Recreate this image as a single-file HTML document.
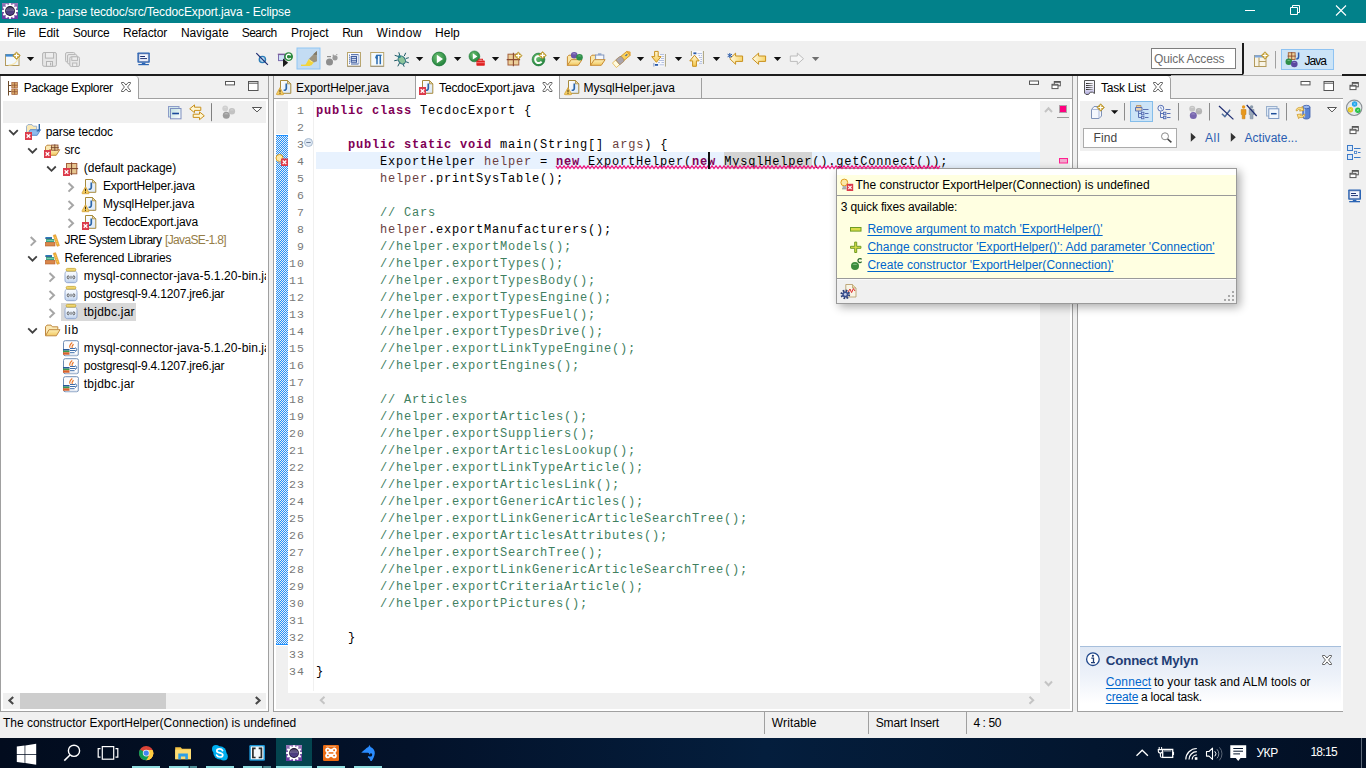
<!DOCTYPE html>
<html>
<head>
<meta charset="utf-8">
<title>Java - parse tecdoc/src/TecdocExport.java - Eclipse</title>
<style>
*{box-sizing:border-box;margin:0;padding:0}
html,body{width:1366px;height:768px;overflow:hidden;background:#f0f0f0}
body{font-family:"Liberation Sans",sans-serif;font-size:12px;color:#000;position:relative}
.a{position:absolute}
.t{position:absolute;white-space:pre;line-height:16px;height:16px;font-size:12px}
.m{position:absolute;white-space:pre;line-height:17px;height:17px;font-family:"Liberation Mono",monospace;font-size:12px;letter-spacing:.8px}
.kw{color:#7f0055;font-weight:bold}
.cm{color:#3f7f5f}
.lv{color:#6a3e3e}
.u{text-decoration:underline;text-underline-offset:1.5px;text-decoration-thickness:1px}
svg{position:absolute;overflow:visible}
</style>
</head>
<body>
<!-- title bar -->
<div class="a" style="left:0;top:0;width:1366px;height:23px;background:#02818a"></div>
<!-- menu bar -->
<div class="a" style="left:0;top:23px;width:1366px;height:18px;background:#fff"></div>
<!-- toolbar bottom dark line -->
<div class="a" style="left:0;top:74px;width:1243px;height:2px;background:#1c1c1c"></div>
<div class="a" style="left:1242px;top:43px;width:2px;height:32px;background:#1c1c1c;border-radius:0 0 2px 0"></div>
<div class="a" style="left:1342px;top:74px;width:24px;height:2px;background:#1c1c1c"></div>

<!-- quick access + java button -->
<div class="a" style="left:1151px;top:48px;width:85px;height:21px;background:#fff;border:1px solid #7e7e7e"></div>
<div class="a" style="left:1281px;top:49px;width:53px;height:21px;background:#cce4f7;border:1px solid #8fc3f2"></div>
<!-- LEFT PANEL -->
<div class="a" style="left:0;top:76px;width:269px;height:636px;background:#fff;border:1px solid #a0a0a0;border-top:none"></div>
<div class="a" style="left:1px;top:76px;width:267px;height:22px;background:#f0f0f0"></div>
<div class="a" style="left:1px;top:98px;width:267px;height:1px;background:#a0a0a0"></div>
<div class="a" style="left:1px;top:76px;width:138px;height:23px;background:#fff;border-right:1px solid #a0a0a0;border-radius:0 4px 0 0"></div>
<div class="a" style="left:3px;top:101px;width:263px;height:22px;background:#f0f0f0"></div>
<!-- tree selection -->
<div class="a" style="left:61px;top:303px;width:75px;height:18px;background:#d9d9d9"></div>
<!-- left hscroll -->
<div class="a" style="left:3px;top:693px;width:263px;height:16px;background:#f0f0f0"></div>
<div class="a" style="left:20px;top:693px;width:146px;height:16px;background:#cdcdcd"></div>

<!-- EDITOR PANEL -->
<div class="a" style="left:273px;top:76px;width:800px;height:636px;background:#fff;border:1px solid #a0a0a0;border-top:none"></div>
<div class="a" style="left:274px;top:76px;width:798px;height:22px;background:#f0f0f0"></div>
<div class="a" style="left:274px;top:98px;width:798px;height:1px;background:#a0a0a0"></div>
<div class="a" style="left:415px;top:76px;width:145px;height:23px;background:#fff;border-left:1px solid #a0a0a0;border-right:1px solid #a0a0a0"></div>
<div class="a" style="left:701px;top:78px;width:1px;height:20px;background:#a0a0a0"></div>
<!-- gutter -->
<div class="a" style="left:276px;top:101px;width:12px;height:608px;background:#f0f0f0"></div>
<div class="a" style="left:276px;top:134px;width:12px;height:512px;background:#fff"></div>
<div class="a" style="left:276px;top:135px;width:12px;height:510px;background:#1e90ff"></div>
<div class="a" style="left:276px;top:136px;width:12px;height:508px;background-image:conic-gradient(#1e90ff 0 25%,#f0f0f0 0 50%,#1e90ff 0 75%,#f0f0f0 0);background-size:2px 2px"></div>
<!-- current line -->
<div class="a" style="left:316px;top:152px;width:724px;height:17px;background:#e8f2fe"></div>
<!-- selected word occurrences -->
<div class="a" style="left:724px;top:152px;width:88px;height:17px;background:#d4d4d4"></div>
<!-- editor scrollbars -->
<div class="a" style="left:1040px;top:101px;width:30px;height:592px;background:#f0f0f0"></div>
<div class="a" style="left:276px;top:693px;width:794px;height:16px;background:#f0f0f0"></div>
<div class="a" style="left:288px;top:101px;width:28px;height:592px;background:#fff"></div>

<!-- RIGHT PANEL -->
<div class="a" style="left:1077px;top:76px;width:266px;height:636px;background:#fff;border:1px solid #a0a0a0;border-top:none;border-right:none"></div>
<div class="a" style="left:1078px;top:76px;width:265px;height:22px;background:#f0f0f0"></div>
<div class="a" style="left:1171px;top:75px;width:171px;height:1px;background:#b4b4b4"></div>
<div class="a" style="left:1078px;top:98px;width:265px;height:1px;background:#a0a0a0"></div>
<div class="a" style="left:1078px;top:76px;width:93px;height:23px;background:#fff;border-right:1px solid #a0a0a0;border-radius:0 4px 0 0"></div>
<div class="a" style="left:1080px;top:101px;width:261px;height:50px;background:#f0f0f0"></div>
<div class="a" style="left:1130px;top:101px;width:23px;height:21px;background:#cce4f7;border:1px solid #84bdea"></div>
<div class="a" style="left:1083px;top:128px;width:94px;height:20px;background:#fff;border:1px solid #ababab"></div>
<!-- mylyn -->
<div class="a" style="left:1080px;top:646px;width:261px;height:62px;background:linear-gradient(#e0e8f4,#ecf1f9 45%,#fff 92%);border-top:1px solid #a7bfdc"></div>

<!-- STATUS BAR -->
<div class="a" style="left:764px;top:712px;width:1px;height:22px;background:#a0a0a0"></div>
<div class="a" style="left:868px;top:712px;width:1px;height:22px;background:#a0a0a0"></div>
<div class="a" style="left:966px;top:712px;width:1px;height:22px;background:#a0a0a0"></div>

<!-- TASKBAR -->
<div class="a" style="left:0;top:738px;width:1366px;height:30px;background:linear-gradient(90deg,#020c1e,#03122a 30%,#041e3d 56%,#03162f 80%,#020f24)"></div>
<div class="a" style="left:276px;top:738px;width:36px;height:30px;background:#04444f"></div>

<!-- POPUP -->
<div class="a" style="left:836px;top:168px;width:401px;height:136px;background:#ffffe1;border:1px solid #9a9a9a;box-shadow:3px 3px 9px rgba(0,0,0,.33)"></div>
<div class="a" style="left:837px;top:169px;width:399px;height:6px;background:#fff"></div>
<div class="a" style="left:837px;top:195px;width:399px;height:1px;background:#9a9a9a"></div>
<div class="a" style="left:837px;top:278px;width:399px;height:25px;background:#f0f0f0;border-top:1px solid #9a9a9a"></div>
<div class="a" style="left:837px;top:279px;width:399px;height:1px;background:#fbfbfb"></div>

<!-- code -->
<div class="m" style="left:280.900px;top:102px;width:24px;text-align:right;color:#787878;font-size:11.5px;letter-spacing:1.1px">1</div>
<div class="m" style="left:316px;top:103px"><span class="kw">public</span> <span class="kw">class</span> TecdocExport {</div>
<div class="m" style="left:280.900px;top:119px;width:24px;text-align:right;color:#787878;font-size:11.5px;letter-spacing:1.1px">2</div>
<div class="m" style="left:280.900px;top:136px;width:24px;text-align:right;color:#787878;font-size:11.5px;letter-spacing:1.1px">3</div>
<div class="m" style="left:316px;top:137px">    <span class="kw">public</span> <span class="kw">static</span> <span class="kw">void</span> main(String[] <span class="lv">args</span>) {</div>
<div class="m" style="left:280.900px;top:153px;width:24px;text-align:right;color:#787878;font-size:11.5px;letter-spacing:1.1px">4</div>
<div class="m" style="left:316px;top:154px">        ExportHelper <span class="lv">helper</span> = <span class="kw">new</span> ExportHelper(<span class="kw">new</span> MysqlHelper().getConnect());</div>
<div class="m" style="left:280.900px;top:170px;width:24px;text-align:right;color:#787878;font-size:11.5px;letter-spacing:1.1px">5</div>
<div class="m" style="left:316px;top:171px">        <span class="lv">helper</span>.printSysTable();</div>
<div class="m" style="left:280.900px;top:187px;width:24px;text-align:right;color:#787878;font-size:11.5px;letter-spacing:1.1px">6</div>
<div class="m" style="left:280.900px;top:204px;width:24px;text-align:right;color:#787878;font-size:11.5px;letter-spacing:1.1px">7</div>
<div class="m" style="left:316px;top:205px">        <span class="cm">// Cars</span></div>
<div class="m" style="left:280.900px;top:221px;width:24px;text-align:right;color:#787878;font-size:11.5px;letter-spacing:1.1px">8</div>
<div class="m" style="left:316px;top:222px">        <span class="lv">helper</span>.exportManufacturers();</div>
<div class="m" style="left:280.900px;top:238px;width:24px;text-align:right;color:#787878;font-size:11.5px;letter-spacing:1.1px">9</div>
<div class="m" style="left:316px;top:239px">        <span class="cm">//helper.exportModels();</span></div>
<div class="m" style="left:280.900px;top:255px;width:24px;text-align:right;color:#787878;font-size:11.5px;letter-spacing:1.1px">10</div>
<div class="m" style="left:316px;top:256px">        <span class="cm">//helper.exportTypes();</span></div>
<div class="m" style="left:280.900px;top:272px;width:24px;text-align:right;color:#787878;font-size:11.5px;letter-spacing:1.1px">11</div>
<div class="m" style="left:316px;top:273px">        <span class="cm">//helper.exportTypesBody();</span></div>
<div class="m" style="left:280.900px;top:289px;width:24px;text-align:right;color:#787878;font-size:11.5px;letter-spacing:1.1px">12</div>
<div class="m" style="left:316px;top:290px">        <span class="cm">//helper.exportTypesEngine();</span></div>
<div class="m" style="left:280.900px;top:306px;width:24px;text-align:right;color:#787878;font-size:11.5px;letter-spacing:1.1px">13</div>
<div class="m" style="left:316px;top:307px">        <span class="cm">//helper.exportTypesFuel();</span></div>
<div class="m" style="left:280.900px;top:323px;width:24px;text-align:right;color:#787878;font-size:11.5px;letter-spacing:1.1px">14</div>
<div class="m" style="left:316px;top:324px">        <span class="cm">//helper.exportTypesDrive();</span></div>
<div class="m" style="left:280.900px;top:340px;width:24px;text-align:right;color:#787878;font-size:11.5px;letter-spacing:1.1px">15</div>
<div class="m" style="left:316px;top:341px">        <span class="cm">//helper.exportLinkTypeEngine();</span></div>
<div class="m" style="left:280.900px;top:357px;width:24px;text-align:right;color:#787878;font-size:11.5px;letter-spacing:1.1px">16</div>
<div class="m" style="left:316px;top:358px">        <span class="cm">//helper.exportEngines();</span></div>
<div class="m" style="left:280.900px;top:374px;width:24px;text-align:right;color:#787878;font-size:11.5px;letter-spacing:1.1px">17</div>
<div class="m" style="left:280.900px;top:391px;width:24px;text-align:right;color:#787878;font-size:11.5px;letter-spacing:1.1px">18</div>
<div class="m" style="left:316px;top:392px">        <span class="cm">// Articles</span></div>
<div class="m" style="left:280.900px;top:408px;width:24px;text-align:right;color:#787878;font-size:11.5px;letter-spacing:1.1px">19</div>
<div class="m" style="left:316px;top:409px">        <span class="cm">//helper.exportArticles();</span></div>
<div class="m" style="left:280.900px;top:425px;width:24px;text-align:right;color:#787878;font-size:11.5px;letter-spacing:1.1px">20</div>
<div class="m" style="left:316px;top:426px">        <span class="cm">//helper.exportSuppliers();</span></div>
<div class="m" style="left:280.900px;top:442px;width:24px;text-align:right;color:#787878;font-size:11.5px;letter-spacing:1.1px">21</div>
<div class="m" style="left:316px;top:443px">        <span class="cm">//helper.exportArticlesLookup();</span></div>
<div class="m" style="left:280.900px;top:459px;width:24px;text-align:right;color:#787878;font-size:11.5px;letter-spacing:1.1px">22</div>
<div class="m" style="left:316px;top:460px">        <span class="cm">//helper.exportLinkTypeArticle();</span></div>
<div class="m" style="left:280.900px;top:476px;width:24px;text-align:right;color:#787878;font-size:11.5px;letter-spacing:1.1px">23</div>
<div class="m" style="left:316px;top:477px">        <span class="cm">//helper.exportArticlesLink();</span></div>
<div class="m" style="left:280.900px;top:493px;width:24px;text-align:right;color:#787878;font-size:11.5px;letter-spacing:1.1px">24</div>
<div class="m" style="left:316px;top:494px">        <span class="cm">//helper.exportGenericArticles();</span></div>
<div class="m" style="left:280.900px;top:510px;width:24px;text-align:right;color:#787878;font-size:11.5px;letter-spacing:1.1px">25</div>
<div class="m" style="left:316px;top:511px">        <span class="cm">//helper.exportLinkGenericArticleSearchTree();</span></div>
<div class="m" style="left:280.900px;top:527px;width:24px;text-align:right;color:#787878;font-size:11.5px;letter-spacing:1.1px">26</div>
<div class="m" style="left:316px;top:528px">        <span class="cm">//helper.exportArticlesAttributes();</span></div>
<div class="m" style="left:280.900px;top:544px;width:24px;text-align:right;color:#787878;font-size:11.5px;letter-spacing:1.1px">27</div>
<div class="m" style="left:316px;top:545px">        <span class="cm">//helper.exportSearchTree();</span></div>
<div class="m" style="left:280.900px;top:561px;width:24px;text-align:right;color:#787878;font-size:11.5px;letter-spacing:1.1px">28</div>
<div class="m" style="left:316px;top:562px">        <span class="cm">//helper.exportLinkGenericArticleSearchTree();</span></div>
<div class="m" style="left:280.900px;top:578px;width:24px;text-align:right;color:#787878;font-size:11.5px;letter-spacing:1.1px">29</div>
<div class="m" style="left:316px;top:579px">        <span class="cm">//helper.exportCriteriaArticle();</span></div>
<div class="m" style="left:280.900px;top:595px;width:24px;text-align:right;color:#787878;font-size:11.5px;letter-spacing:1.1px">30</div>
<div class="m" style="left:316px;top:596px">        <span class="cm">//helper.exportPictures();</span></div>
<div class="m" style="left:280.900px;top:612px;width:24px;text-align:right;color:#787878;font-size:11.5px;letter-spacing:1.1px">31</div>
<div class="m" style="left:280.900px;top:629px;width:24px;text-align:right;color:#787878;font-size:11.5px;letter-spacing:1.1px">32</div>
<div class="m" style="left:316px;top:630px">    }</div>
<div class="m" style="left:280.900px;top:646px;width:24px;text-align:right;color:#787878;font-size:11.5px;letter-spacing:1.1px">33</div>
<div class="m" style="left:280.900px;top:663px;width:24px;text-align:right;color:#787878;font-size:11.5px;letter-spacing:1.1px">34</div>
<div class="m" style="left:316px;top:664px">}</div>
<!-- editor overlay -->
<svg style="left:270px;top:98px" width="810" height="614" viewBox="270 98 810 614">
 <polyline points="556,165.800 558,168.600 560,165.800 562,168.600 564,165.800 566,168.600 568,165.800 570,168.600 572,165.800 574,168.600 576,165.800 578,168.600 580,165.800 582,168.600 584,165.800 586,168.600 588,165.800 590,168.600 592,165.800 594,168.600 596,165.800 598,168.600 600,165.800 602,168.600 604,165.800 606,168.600 608,165.800 610,168.600 612,165.800 614,168.600 616,165.800 618,168.600 620,165.800 622,168.600 624,165.800 626,168.600 628,165.800 630,168.600 632,165.800 634,168.600 636,165.800 638,168.600 640,165.800 642,168.600 644,165.800 646,168.600 648,165.800 650,168.600 652,165.800 654,168.600 656,165.800 658,168.600 660,165.800 662,168.600 664,165.800 666,168.600 668,165.800 670,168.600 672,165.800 674,168.600 676,165.800 678,168.600 680,165.800 682,168.600 684,165.800 686,168.600 688,165.800 690,168.600 692,165.800 694,168.600 696,165.800 698,168.600 700,165.800 702,168.600 704,165.800 706,168.600 708,165.800 710,168.600 712,165.800 714,168.600 716,165.800 718,168.600 720,165.800 722,168.600 724,165.800 726,168.600 728,165.800 730,168.600 732,165.800 734,168.600 736,165.800 738,168.600 740,165.800 742,168.600 744,165.800 746,168.600 748,165.800 750,168.600 752,165.800 754,168.600 756,165.800 758,168.600 760,165.800 762,168.600 764,165.800 766,168.600 768,165.800 770,168.600 772,165.800 774,168.600 776,165.800 778,168.600 780,165.800 782,168.600 784,165.800 786,168.600 788,165.800 790,168.600 792,165.800 794,168.600 796,165.800 798,168.600 800,165.800 802,168.600 804,165.800 806,168.600 808,165.800 810,168.600 812,165.800 814,168.600 816,165.800 818,168.600 820,165.800 822,168.600 824,165.800 826,168.600 828,165.800 830,168.600 832,165.800 834,168.600 836,165.800 838,168.600 840,165.800 842,168.600 844,165.800 846,168.600 848,165.800 850,168.600 852,165.800 854,168.600 856,165.800 858,168.600 860,165.800 862,168.600 864,165.800 866,168.600 868,165.800 870,168.600 872,165.800 874,168.600 876,165.800 878,168.600 880,165.800 882,168.600 884,165.800 886,168.600 888,165.800 890,168.600 892,165.800 894,168.600 896,165.800 898,168.600 900,165.800 902,168.600 904,165.800 906,168.600 908,165.800 910,168.600 912,165.800 914,168.600 916,165.800 918,168.600 920,165.800 922,168.600 924,165.800 926,168.600 928,165.800 930,168.600 932,165.800 934,168.600 936,165.800 938,168.600 940,165.800" fill="none" stroke="#f0107a" stroke-width="1.150"/>
 <rect x="708" y="152" width="2" height="17" fill="#111"/>
 <path d="M313.500 101v590" stroke="#f0f0f0" stroke-width="1"/>
 <!-- fold marker -->
 <circle cx="308.500" cy="142.500" r="4" fill="#dfe9f4" stroke="#a9bbd0" stroke-width="1"/>
 <path d="M306.300 142.500h4.400" stroke="#6f7f98" stroke-width="1"/>
 <!-- quick fix marker -->
 <circle cx="279.500" cy="158" r="3.500" fill="#fbe9a8" stroke="#e0a020" stroke-width="1"/>
 <rect x="278" y="161.500" width="3.500" height="2.300" fill="#a8b0b8"/>
 <rect x="281" y="158.500" width="7" height="7.500" fill="#dc3b4b"/>
 <path d="M282.700 160.500l3.600 3.600M286.300 160.500l-3.600 3.600" stroke="#fff" stroke-width="1.300"/>
 <!-- overview ruler -->
 <rect x="1059.500" y="105.500" width="7" height="7" fill="#ff0080" stroke="#b0a0a8" stroke-width="1"/>
 <path d="M1057 117.500h12" stroke="#9a9a9a" stroke-width="1"/>
 <rect x="1059.500" y="158.500" width="8" height="4.500" fill="#f0a8cc" stroke="#ff2090" stroke-width="1"/>
 <!-- scroll arrows -->
 <g fill="none" stroke="#c4c4c4" stroke-width="2">
  <path d="M1045 112l3.500-3.700 3.500 3.700"/>
  <path d="M1045 681.500l3.500 3.700 3.500-3.700"/>
  <path d="M324.500 696.800l-3.700 3.500 3.700 3.500"/>
  <path d="M1029.500 696.800l3.700 3.500-3.700 3.500"/>
 </g>
</svg>
<!-- left panel scroll arrows -->
<svg style="left:0;top:690px" width="270" height="20" viewBox="0 690 270 20">
 <path d="M13.200 696.900l-3.800 3.500 3.800 3.500M255.800 696.900l3.800 3.500-3.800 3.500" fill="none" stroke="#484848" stroke-width="2.100"/>
</svg>

<!-- text -->
<div class="t" style="left:22.6px;top:4px;letter-spacing:-0.136px;color:#fff">Java - parse tecdoc/src/TecdocExport.java - Eclipse</div>
<div class="t" style="left:6.9px;top:25px;letter-spacing:-0.215px">File</div>
<div class="t" style="left:38.4px;top:25px;letter-spacing:0.004px">Edit</div>
<div class="t" style="left:72.7px;top:25px;letter-spacing:-0.226px">Source</div>
<div class="t" style="left:122.9px;top:25px;letter-spacing:-0.151px">Refactor</div>
<div class="t" style="left:180.9px;top:25px;letter-spacing:0.046px">Navigate</div>
<div class="t" style="left:241.7px;top:25px;letter-spacing:-0.526px">Search</div>
<div class="t" style="left:291.0px;top:25px;letter-spacing:0.040px">Project</div>
<div class="t" style="left:342.2px;top:25px;letter-spacing:-0.608px">Run</div>
<div class="t" style="left:376.6px;top:25px;letter-spacing:0.423px">Window</div>
<div class="t" style="left:435.0px;top:25px;letter-spacing:0.037px">Help</div>
<div class="t" style="left:1154.0px;top:51px;letter-spacing:-0.130px;color:#6d6d6d">Quick Access</div>
<div class="t" style="left:1304.4px;top:53px;letter-spacing:-0.953px">Java</div>
<div class="t" style="left:23.8px;top:80px;letter-spacing:-0.361px">Package Explorer</div>
<div class="t" style="left:45.7px;top:124px;letter-spacing:-0.120px">parse tecdoc</div>
<div class="t" style="left:64.4px;top:142px;letter-spacing:-0.100px">src</div>
<div class="t" style="left:83.8px;top:160px;letter-spacing:-0.021px">(default package)</div>
<div class="t" style="left:102.9px;top:178px;letter-spacing:-0.164px">ExportHelper.java</div>
<div class="t" style="left:102.9px;top:196px;letter-spacing:0.008px">MysqlHelper.java</div>
<div class="t" style="left:102.9px;top:214px;letter-spacing:-0.179px">TecdocExport.java</div>
<div class="t" style="left:64.6px;top:232px;letter-spacing:-0.502px">JRE System Library</div>
<div class="t" style="left:165.0px;top:232px;letter-spacing:-0.646px;color:#957d47">[JavaSE-1.8]</div>
<div class="t" style="left:64.6px;top:250px;letter-spacing:-0.242px">Referenced Libraries</div>
<div class="t" style="left:83.8px;top:268px;letter-spacing:0.088px;width:182.2px;overflow:hidden">mysql-connector-java-5.1.20-bin.jar</div>
<div class="t" style="left:83.8px;top:286px;letter-spacing:-0.196px">postgresql-9.4.1207.jre6.jar</div>
<div class="t" style="left:83.8px;top:304px;letter-spacing:0.233px">tbjdbc.jar</div>
<div class="t" style="left:64.6px;top:322px;letter-spacing:0.742px">lib</div>
<div class="t" style="left:83.8px;top:340px;letter-spacing:0.088px;width:182.2px;overflow:hidden">mysql-connector-java-5.1.20-bin.jar</div>
<div class="t" style="left:83.8px;top:358px;letter-spacing:-0.196px">postgresql-9.4.1207.jre6.jar</div>
<div class="t" style="left:83.8px;top:376px;letter-spacing:0.233px">tbjdbc.jar</div>
<div class="t" style="left:296.1px;top:80px;letter-spacing:-0.107px">ExportHelper.java</div>
<div class="t" style="left:439.1px;top:80px;letter-spacing:-0.160px">TecdocExport.java</div>
<div class="t" style="left:583.4px;top:80px;letter-spacing:0.008px">MysqlHelper.java</div>
<div class="t" style="left:1101.0px;top:80px;letter-spacing:-0.261px">Task List</div>
<div class="t" style="left:1093.6px;top:130px;letter-spacing:0.085px;color:#444">Find</div>
<div class="t" style="left:1204.9px;top:130px;letter-spacing:0.678px;color:#2a5db0">All</div>
<div class="t" style="left:1244.4px;top:130px;letter-spacing:0.051px;color:#2a5db0">Activate...</div>
<div class="t" style="left:1105.8px;top:652px;letter-spacing:-0.165px;line-height:17px;height:17px;color:#1f3d75;font-size:13.3px;font-weight:bold">Connect Mylyn</div>
<div class="t u" style="left:1105.8px;top:674px;letter-spacing:0.116px;color:#0066cc">Connect</div>
<div class="t" style="left:1153.9px;top:674px;letter-spacing:0.046px">to your task and ALM tools or</div>
<div class="t u" style="left:1105.8px;top:689px;letter-spacing:-0.152px;color:#0066cc">create</div>
<div class="t" style="left:1140.9px;top:689px;letter-spacing:-0.181px">a local task.</div>
<div class="t" style="left:855.4px;top:177px;letter-spacing:0.014px">The constructor ExportHelper(Connection) is undefined</div>
<div class="t" style="left:840.8px;top:199px;letter-spacing:-0.156px">3 quick fixes available:</div>
<div class="t u" style="left:867.4px;top:221px;letter-spacing:0.030px;color:#0066cc">Remove argument to match &#x27;ExportHelper()&#x27;</div>
<div class="t u" style="left:867.4px;top:239px;letter-spacing:0.041px;color:#0066cc">Change constructor &#x27;ExportHelper()&#x27;: Add parameter &#x27;Connection&#x27;</div>
<div class="t u" style="left:867.4px;top:257px;letter-spacing:0.019px;color:#0066cc">Create constructor &#x27;ExportHelper(Connection)&#x27;</div>
<div class="t" style="left:2.9px;top:715px;letter-spacing:-0.002px">The constructor ExportHelper(Connection) is undefined</div>
<div class="t" style="left:771.8px;top:715px;letter-spacing:0.129px">Writable</div>
<div class="t" style="left:875.8px;top:715px;letter-spacing:-0.178px">Smart Insert</div>
<div class="t" style="left:973.4px;top:715px;letter-spacing:-0.406px">4 : 50</div>
<div class="t" style="left:1256.4px;top:745px;letter-spacing:-0.413px;color:#fff">УКР</div>
<div class="t" style="left:1310.4px;top:744px;letter-spacing:-0.708px;color:#fff">18:15</div>
<!-- icons -->
<!-- taskbar icons -->
<svg style="left:0;top:738px" width="400" height="30" viewBox="0 738 400 30">
 <!-- windows logo -->
 <g fill="#fff">
  <polygon points="16.8,746.6 24.6,745.5 24.6,754 16.8,754"/>
  <polygon points="25.3,745.4 36.2,743.8 36.2,754 25.3,754"/>
  <polygon points="16.8,754.7 24.6,754.7 24.6,763 16.8,761.9"/>
  <polygon points="25.3,754.7 36.2,754.7 36.2,764.7 25.3,763.1"/>
 </g>
 <!-- search -->
 <circle cx="74" cy="750.8" r="5.6" fill="none" stroke="#fff" stroke-width="1.4"/>
 <line x1="70" y1="755" x2="64.3" y2="760.6" stroke="#fff" stroke-width="1.5"/>
 <!-- task view -->
 <rect x="102.3" y="746.6" width="11.4" height="12.6" fill="none" stroke="#fff" stroke-width="1.2"/>
 <path d="M100.5 748.7h-2.3v8.4h2.3M115.5 748.7h2.3v8.4h-2.3" fill="none" stroke="#fff" stroke-width="1.2"/>
 <!-- chrome -->
 <g>
  <circle cx="146.2" cy="753.1" r="7.2" fill="#db4437"/>
  <path d="M146.2 753.1 L139.97 756.7 A7.2 7.2 0 0 0 146.2 760.3 A7.2 7.2 0 0 0 149.8 759.33 Z" fill="#0f9d58"/>
  <path d="M146.2 753.1 L139.97 749.5 A7.2 7.2 0 0 0 139.97 756.7 L143.5 758 Z" fill="#0f9d58"/>
  <path d="M146.2 753.1 L153.4 753.1 A7.2 7.2 0 0 1 146.2 760.3 L149 756 Z" fill="#ffcd40"/>
  <path d="M146.2 749.9 L152.6 749.9 A7.2 7.2 0 0 1 153.4 753.1 A7.2 7.2 0 0 1 147.4 760.2 L150 754 Z" fill="#ffcd40"/>
  <circle cx="146.2" cy="753.1" r="3.4" fill="#f1f1f1"/>
  <circle cx="146.2" cy="753.1" r="2.6" fill="#4285f4"/>
 </g>
 <!-- explorer -->
 <g>
  <path d="M175.2 747.2h5.5l1.3 1.6h9v10.4h-15.8z" fill="#f6c445"/>
  <path d="M175.2 749.6h15.8v9.6h-15.8z" fill="#fcdc74"/>
  <path d="M178.3 753.6h9.6v5.6h-2.6v-2.8h-4.4v2.8h-2.6z" fill="#2d9fe8"/>
 </g>
 <!-- skype -->
 <g>
  <circle cx="219.9" cy="752.8" r="6.6" fill="#00aff0"/>
  <circle cx="216" cy="749" r="4" fill="#00aff0"/>
  <circle cx="223.8" cy="756.6" r="4" fill="#00aff0"/>
  <path d="M222.6 750.6c-.6-1.2-1.8-1.7-3-1.7-1.6 0-2.8.8-2.8 2 0 2.6 6 1.3 6 4 0 1.3-1.3 2.1-3 2.1-1.5 0-2.7-.7-3.2-1.9" fill="none" stroke="#fff" stroke-width="1.7" stroke-linecap="round"/>
 </g>
 <!-- brackets -->
 <g>
  <rect x="249.3" y="745" width="15.7" height="15.7" rx="1.2" fill="#1b93d2"/>
  <rect x="250.8" y="746.4" width="12.7" height="12.9" fill="#f4f8fb"/>
  <path d="M255.6 748.3h-2.7v9.2h2.7M258.7 748.3h2.7v9.2h-2.7" fill="none" stroke="#2b2b2b" stroke-width="1.7"/>
 </g>
 <!-- eclipse -->
 <g><defs><linearGradient id="kbg" x1="0" y1="0" x2="0" y2="1"><stop offset="0" stop-color="#9a7cba"/><stop offset=".5" stop-color="#6a4a98"/><stop offset="1" stop-color="#6a3aa4"/></linearGradient>
 <linearGradient id="kin" x1="0" y1="0" x2="0" y2="1"><stop offset="0" stop-color="#3a3058"/><stop offset=".45" stop-color="#8a80aa"/><stop offset=".55" stop-color="#5a4a90"/><stop offset="1" stop-color="#4a3a80"/></linearGradient></defs>
 <rect x="286" y="745" width="16" height="16" fill="url(#kbg)"/>
 <path d="M300.21 751.92L301.83 751.97L301.83 754.03L300.21 754.08L299.92 755.17L301.30 756.02L300.27 757.81L298.83 757.04L298.04 757.83L298.81 759.27L297.02 760.30L296.17 758.92L295.08 759.21L295.03 760.83L292.97 760.83L292.92 759.21L291.83 758.92L290.98 760.30L289.19 759.27L289.96 757.83L289.17 757.04L287.73 757.81L286.70 756.02L288.08 755.17L287.79 754.08L286.17 754.03L286.17 751.97L287.79 751.92L288.08 750.83L286.70 749.98L287.73 748.19L289.17 748.96L289.96 748.17L289.19 746.73L290.98 745.70L291.83 747.08L292.92 746.79L292.97 745.17L295.03 745.17L295.08 746.79L296.17 747.08L297.02 745.70L298.81 746.73L298.04 748.17L298.83 748.96L300.27 748.19L301.30 749.98L299.92 750.83Z" fill="#fff"/>
 <circle cx="294.0" cy="753.0" r="4.90" fill="#1c1830"/>
 <circle cx="294.0" cy="753.0" r="4.10" fill="url(#kin)"/>
 <path d="M290.40 752.10h7.20M290.20 753.90h7.60" stroke="#3a2f66" stroke-width="0.70"/></g>
 <!-- xampp -->
 <g>
  <rect x="323" y="745" width="16" height="16" rx="1.300" fill="#ea6a12"/>
  <path d="M325.800 746.400h10.400" stroke="#f6c8a0" stroke-width=".6"/>
  <path d="M325.200 750c0-2.300 2.800-3.300 4.400-1.600l1.400.7 1.400-.7c1.600-1.700 4.400-.7 4.400 1.600 0 1.200-.5 1.800-1.100 2.300v1.300c.6.500 1.100 1.100 1.100 2.300 0 2.300-2.800 3.300-4.400 1.600l-1.400-.7-1.400.7c-1.600 1.700-4.400.7-4.400-1.600 0-1.200.5-1.800 1.100-2.300v-1.300c-.6-.5-1.100-1.100-1.100-2.300z" fill="#fff"/>
  <path d="M328.600 752.950h4.800" stroke="#ea6a12" stroke-width="1.500"/>
  <circle cx="327.900" cy="750.300" r=".95" fill="#ea6a12"/><circle cx="334.100" cy="750.300" r=".95" fill="#ea6a12"/>
  <circle cx="327.900" cy="755.600" r=".95" fill="#ea6a12"/><circle cx="334.100" cy="755.600" r=".95" fill="#ea6a12"/>
 </g>
 <!-- dolphin -->
 <path d="M361.200 752.500C363 751.200 365 749.600 366.500 748.100L368.300 746.900L369.700 744.900L370.500 746.900C373.200 747.900 375 750.300 374.800 753.300C374.600 756.100 373.400 758.700 371.700 760.900L370.500 761.100C370.300 759.600 369.400 758.100 367.700 757.200L368.500 755.900C369.800 756.700 371 756.700 371.800 755.900C372.700 754.700 372.100 753.300 370.700 753L369.800 754.700L368.700 752.900C366.500 752.500 364 753.300 361.200 752.500Z" fill="#2a8cff"/>
 <!-- indicators -->
 <g fill="#8fdcdf">
  <rect x="132" y="766" width="28" height="2"/>
  <rect x="169" y="766" width="28" height="2"/>
  <rect x="206" y="766" width="28" height="2"/>
  <rect x="243" y="766" width="28" height="2"/>
  <rect x="276" y="766" width="36" height="2"/>
  <rect x="317" y="766" width="28" height="2"/>
  <rect x="354" y="766" width="28" height="2"/>
 </g>
 <g fill="#4f8d95"><rect x="189.5" y="766" width="7.500" height="2"/><rect x="263" y="766" width="8" height="2"/></g>
 <g fill="#020f22"><rect x="188.700" y="766" width="1" height="2"/><rect x="262.200" y="766" width="1" height="2"/></g>
</svg>
<!-- tray -->
<svg style="left:1120px;top:738px" width="246" height="30" viewBox="1120 738 246 30">
 <polyline points="1136.500,755.800 1142.200,750.200 1147.900,755.800" fill="none" stroke="#fff" stroke-width="1.300"/>
 <!-- battery -->
 <g fill="none" stroke="#fff" stroke-width="1.300">
  <rect x="1162.700" y="749.400" width="10" height="8"/>
  <path d="M1173.400 751.800v3.200"/>
  <path d="M1159.200 747v2.500M1161.600 747v2.500" stroke-width="1"/>
  <path d="M1158.300 749.600h4.200v1.400c0 1.300-1 2-2.100 2s-2.100-.7-2.100-2zM1160.400 753v3.300c0 .9.700 1.200 2.300 1.200" stroke-width="1.100"/>
 </g>
 <path d="M1164 750.900h7.400" stroke="#fff" stroke-width=".8"/>
 <!-- wifi -->
 <g fill="none" stroke="#fff" stroke-width="1.200">
  <path d="M1185.800 759.500a11 11 0 0 1 11-11"/>
  <path d="M1189 759.500a7.800 7.800 0 0 1 7.800-7.800"/>
  <path d="M1192.200 759.500a4.600 4.600 0 0 1 4.600-4.600"/>
 </g>
 <rect x="1194.800" y="757.200" width="2.600" height="2.600" fill="#fff"/>
 <!-- volume -->
 <path d="M1206.500 751.500h2.500l3.500-3.300v11.200l-3.500-3.300h-2.500z" fill="none" stroke="#fff" stroke-width="1.100" stroke-linejoin="round"/>
 <path d="M1214.800 751.300a3.500 3.500 0 0 1 0 5" fill="none" stroke="#fff" stroke-width="1"/>
 <path d="M1217 749.300a6.500 6.500 0 0 1 0 9" fill="none" stroke="#8a93a0" stroke-width="1"/>
 <path d="M1219.400 747.300a9.500 9.500 0 0 1 0 13" fill="none" stroke="#5a6575" stroke-width="1"/>
 <!-- notification -->
 <path d="M1230.300 745.200h15.900v12.800h-5.600l-2.400 2.900-2.400-2.900h-5.500z" fill="#fff"/>
 <g stroke="#03142c" stroke-width="1"><path d="M1233.300 748.500h9.700M1233.300 751.200h9.700M1233.300 753.900h6.700"/></g>
 <rect x="1361" y="738" width="1" height="30" fill="#5c6878"/>
</svg>
<!-- title bar icon + controls -->
<svg style="left:0;top:0" width="24" height="23" viewBox="0 0 24 23">
 <defs><linearGradient id="tbg" x1="0" y1="0" x2="0" y2="1"><stop offset="0" stop-color="#9a7cba"/><stop offset=".5" stop-color="#6a4a98"/><stop offset="1" stop-color="#6a3aa4"/></linearGradient>
 <linearGradient id="tin" x1="0" y1="0" x2="0" y2="1"><stop offset="0" stop-color="#3a3058"/><stop offset=".45" stop-color="#8a80aa"/><stop offset=".55" stop-color="#5a4a90"/><stop offset="1" stop-color="#4a3a80"/></linearGradient></defs>
 <rect x="2" y="3" width="16" height="16" fill="url(#tbg)"/>
 <path d="M16.21 9.92L17.83 9.97L17.83 12.03L16.21 12.08L15.92 13.17L17.30 14.02L16.27 15.81L14.83 15.04L14.04 15.83L14.81 17.27L13.02 18.30L12.17 16.92L11.08 17.21L11.03 18.83L8.97 18.83L8.92 17.21L7.83 16.92L6.98 18.30L5.19 17.27L5.96 15.83L5.17 15.04L3.73 15.81L2.70 14.02L4.08 13.17L3.79 12.08L2.17 12.03L2.17 9.97L3.79 9.92L4.08 8.83L2.70 7.98L3.73 6.19L5.17 6.96L5.96 6.17L5.19 4.73L6.98 3.70L7.83 5.08L8.92 4.79L8.97 3.17L11.03 3.17L11.08 4.79L12.17 5.08L13.02 3.70L14.81 4.73L14.04 6.17L14.83 6.96L16.27 6.19L17.30 7.98L15.92 8.83Z" fill="#fff"/>
 <circle cx="10.0" cy="11.0" r="4.90" fill="#1c1830"/>
 <circle cx="10.0" cy="11.0" r="4.10" fill="url(#tin)"/>
 <path d="M6.40 10.10h7.20M6.20 11.90h7.60" stroke="#3a2f66" stroke-width="0.70"/>
</svg>
<svg style="left:1230px;top:0" width="136" height="23" viewBox="1230 0 136 23">
 <path d="M1245 10.500h10" stroke="#fff" stroke-width="1"/>
 <path d="M1290.500 7.500h7v7h-7z M1292.500 7.500v-2h7v7h-2" fill="none" stroke="#fff" stroke-width="1"/>
 <path d="M1336 5.500l10 10M1346 5.500l-10 10" stroke="#fff" stroke-width="1.100"/>
</svg>
<!-- toolbar icons -->
<svg style="left:0;top:42px" width="1366" height="32" viewBox="0 42 1366 32">
 <defs>
  <linearGradient id="gY" x1="0" y1="0" x2="0" y2="1"><stop offset="0" stop-color="#fff8d8"/><stop offset="1" stop-color="#f6c84a"/></linearGradient>
  <linearGradient id="gYh" x1="0" y1="0" x2="1" y2="0"><stop offset="0" stop-color="#fffbe6"/><stop offset="1" stop-color="#f8d468"/></linearGradient>
  <radialGradient id="gG" cx=".4" cy=".35" r=".7"><stop offset="0" stop-color="#6cc070"/><stop offset="1" stop-color="#1f7f3a"/></radialGradient>
  <linearGradient id="gF" x1="0" y1="0" x2="0" y2="1"><stop offset="0" stop-color="#fdf0b8"/><stop offset="1" stop-color="#f2c860"/></linearGradient>
  <g id="dd"><path d="M0 0h7.400l-3.700 4z" fill="#111"/></g>
  <g id="star"><path d="M0 -3.800L3.800 0L0 3.800L-3.800 0z" fill="#c9a230" stroke="#a88420" stroke-width=".5"/><path d="M0 -2.300V2.300M-2.300 0H2.300" stroke="#fff" stroke-width="1.200"/></g>
 </defs>
 <!-- new wizard -->
 <rect x="5.500" y="54.500" width="13.500" height="11" fill="#f2f8fd" stroke="#b39a5c" stroke-width="1"/>
 <rect x="5.500" y="54.200" width="13.500" height="2.400" fill="#3c89d4"/>
 <path d="M8.500 65.200c5-.2 8.500-2.500 9.600-7" fill="none" stroke="#f5e6b0" stroke-width="1.300"/>
 <use href="#star" x="16.500" y="55.700"/>
 <use href="#dd" x="26.800" y="57"/>
 <!-- save (disabled) -->
 <g fill="#e6e6e6" stroke="#b4b4b4" stroke-width="1">
  <rect x="42.600" y="52.500" width="13.800" height="13.800" rx="1.500"/>
  <rect x="45.400" y="52.500" width="8.200" height="5.600" fill="#ededed"/>
  <rect x="46.500" y="61.500" width="6" height="4.800" fill="#ededed"/>
 </g>
 <rect x="50" y="62.600" width="1.200" height="2.800" fill="#b4b4b4"/>
 <!-- save all (disabled) -->
 <g fill="#e6e6e6" stroke="#b9b9b9" stroke-width="1">
  <rect x="65.500" y="52.500" width="9.500" height="9.500" rx="1.500"/>
  <rect x="67.500" y="54.500" width="9.500" height="9.500" rx="1.500"/>
  <rect x="69.800" y="56.800" width="9.700" height="9.700" rx="1.500"/>
  <rect x="71.800" y="56.800" width="5.700" height="3.600" fill="#ededed"/>
  <rect x="72.600" y="63" width="4.200" height="3.500" fill="#ededed"/>
 </g>
 <!-- monitor -->
 <rect x="137.400" y="52.400" width="12.400" height="10.400" rx=".8" fill="#2b64b4"/>
 <rect x="139" y="54" width="9.200" height="7.200" fill="#f2f6ff" stroke="#8a96b8" stroke-width=".6"/>
 <path d="M140.200 56.500h4.800M140.200 58.600h6.800" stroke="#1f3272" stroke-width="1"/>
 <path d="M141.800 62.800h3.600v1.500h-3.600z" fill="#2b64b4"/><rect x="138.300" y="64" width="10.600" height="1.200" fill="#2b64b4"/>
 <!-- skip breakpoints -->
 <circle cx="262.400" cy="59.500" r="3.100" fill="#b9d9ee" stroke="#2b7cb8" stroke-width="1.400"/>
 <path d="M256.300 53.200L267.900 64.800" stroke="#1d2b70" stroke-width="1.200"/>
 <!-- new java project-ish -->
 <rect x="278.500" y="54.600" width="6" height="6" fill="#cfe0f6" stroke="#7a6cae" stroke-width="1"/>
 <path d="M277.800 54.300h7.400" stroke="#7a5a9a" stroke-width="1.300"/>
 <path d="M283 58.400l5.200 4.300-5.200 4.300z" fill="#1a1a1a"/>
 <circle cx="288.600" cy="56.600" r="4.400" fill="#2a8a3c"/>
 <path d="M290.700 55.300a2.400 2.400 0 1 0 0 2.700" fill="none" stroke="#fff" stroke-width="1.300"/>
 <!-- highlighter (selected) -->
 <rect x="297" y="48" width="23" height="21" fill="#c3dcf3" stroke="#8fc5f4" stroke-width="1"/>
 <path d="M316.800 51l.2 10.200-3.200 1.200-5-3.400z" fill="#9c937f"/>
 <path d="M313 54.600l3.900-3.500.1 4z" fill="#7f7866"/>
 <path d="M308.800 59l5 3.400-2.600 3.200h-6.100z" fill="#f2d43a"/>
 <path d="M309.500 60.200l2.800 1.900" stroke="#fbe98a" stroke-width="1"/>
 <path d="M301 65.300h9" stroke="#f2d43a" stroke-width="1.400"/>
 <!-- gray icon -->
 <circle cx="329.500" cy="62" r="3.500" fill="#8e8e8e"/>
 <path d="M327 56.600h4" stroke="#8e8e8e" stroke-width="1.200"/>
 <circle cx="335" cy="57.800" r="2.600" fill="#9a9a9a"/><circle cx="333.300" cy="55.200" r=".8" fill="#9a9a9a"/><circle cx="336.800" cy="54.600" r=".7" fill="#9a9a9a"/>
 <!-- block selection -->
 <rect x="347.500" y="52.500" width="13" height="13.800" fill="#fbfcff" stroke="#b9a66e" stroke-width="1"/>
 <path d="M347.500 66.300h13" stroke="#9a937f" stroke-width="1"/>
 <g stroke="#3b5ca0" stroke-width="1"><path d="M351 54.700h7.500M351 64h7.500"/><path d="M349.500 54.700v9.600M358.800 55.500v8.500" stroke-dasharray="1 1"/></g>
 <rect x="351.200" y="56.600" width="5.400" height="5.600" fill="#dfe7f7" stroke="#2f4f94" stroke-width="1"/><path d="M351.200 58.500h5.400M351.200 60.400h5.400" stroke="#2f4f94" stroke-width=".8"/>
 <!-- pilcrow -->
 <rect x="370.700" y="52.500" width="13" height="13.800" fill="#f4fbff" stroke="#b9a66e" stroke-width="1"/>
 <path d="M370.700 66.300h13" stroke="#9a937f" stroke-width="1"/>
 <path d="M376.300 55.300h5.300" stroke="#2b6cb0" stroke-width="1.300"/>
 <path d="M377 55v9.300M380.300 55v9.300" stroke="#2b6cb0" stroke-width="1.500"/>
 <path d="M377.600 55a2.300 2.300 0 1 0 0 4.600z" fill="#2b6cb0"/>
 <!-- bug -->
 <g stroke="#1f5a66" stroke-width="1" fill="none">
  <path d="M398.500 56.500l-3.800-1.200M397.800 60l-3.600.8M399.500 63l-1.700 3.300M404.300 56l1.400-3.200M405.800 58.500l3-.8M405.300 61.500l3.500 1.300M403 64l1.200 2.700M399.700 55.300l-.9-3"/>
 </g>
 <ellipse cx="401.800" cy="60" rx="3.300" ry="4.300" transform="rotate(-35 401.800 60)" fill="#8cc49a" stroke="#2b6f7c" stroke-width="1"/>
 <circle cx="399.400" cy="56.400" r="1.500" fill="#2b7f8c"/>
 <use href="#dd" x="415.900" y="57"/>
 <!-- run -->
 <circle cx="439.100" cy="59" r="6.900" fill="url(#gG)" stroke="#1c7a38" stroke-width=".8"/>
 <path d="M436.800 54.800l6.200 4.200-6.200 4.200z" fill="#fff"/>
 <use href="#dd" x="453.900" y="57"/>
 <!-- run ext -->
 <circle cx="474.400" cy="56.400" r="5.400" fill="url(#gG)" stroke="#1c7a38" stroke-width=".6"/>
 <path d="M472.800 53.300l4.600 3.100-4.600 3.100z" fill="#fff"/>
 <rect x="476.400" y="60.600" width="8.400" height="5.200" rx=".8" fill="#e01f1f"/>
 <path d="M478.800 60.600v-1.300h3.600v1.300" fill="none" stroke="#e01f1f" stroke-width="1.100"/>
 <path d="M476.400 62.700h8.400" stroke="#f6a0a0" stroke-width=".7"/>
 <use href="#dd" x="491.800" y="57"/>
 <!-- new package -->
 <rect x="508" y="54.200" width="10.800" height="10.800" fill="#ecd09a" stroke="#a4603c" stroke-width="1"/>
 <path d="M513.400 52.800v13.400M506.700 59.600h13.400" stroke="#8a4a30" stroke-width="1.100"/>
 <use href="#star" x="518.300" y="55.700"/>
 <!-- new class -->
 <circle cx="538.500" cy="59.500" r="6.400" fill="url(#gG)" stroke="#1c7a38" stroke-width=".6"/>
 <path d="M541.600 57.300a3.600 3.600 0 1 0 0 4.400" fill="none" stroke="#fff" stroke-width="2"/>
 <use href="#star" x="542.600" y="55.300"/>
 <use href="#dd" x="552.800" y="57"/>
 <!-- open type -->
 <path d="M567.400 65.300v-8.600l1.500-1.500h4l1.300 1.500h5.500v3z" fill="#fbe7a8" stroke="#c88b32" stroke-width="1" stroke-linejoin="round"/>
 <path d="M567.400 65.300l3.800-5.600h10.800l-3.800 5.600z" fill="url(#gF)" stroke="#c88b32" stroke-width="1" stroke-linejoin="round"/>
 <circle cx="574.200" cy="55.200" r="3.300" fill="#6a55a8"/><path d="M572.300 54.200a2 1.200 0 0 1 3.800 0" fill="#a596d4"/>
 <circle cx="579.500" cy="57.300" r="3.300" fill="#2f8f4a"/><path d="M577.600 56.300a2 1.200 0 0 1 3.800 0" fill="#86cc96"/>
 <!-- open task -->
 <path d="M590.500 65.300v-8.600l1.500-1.500h4l1.300 1.500h5.500v3z" fill="#fbe7a8" stroke="#c88b32" stroke-width="1" stroke-linejoin="round"/>
 <rect x="595.600" y="55" width="8.200" height="5" fill="#f4f7fc" stroke="#8296bc" stroke-width="1"/>
 <rect x="598" y="53.300" width="3.400" height="1.800" fill="#8fa6cc"/>
 <path d="M590.500 65.300l3.800-5.600h10.800l-3.800 5.600z" fill="url(#gF)" stroke="#c88b32" stroke-width="1" stroke-linejoin="round"/>
 <!-- search torch -->
 <g transform="rotate(-40 622 58.800)">
  <rect x="612.500" y="56.200" width="18" height="5.200" fill="#f8d05c" stroke="#d89a2c" stroke-width=".9"/>
  <path d="M612 55.800h4.500v6h-4.500z" fill="#fffbe0" stroke="#e0b040" stroke-width=".6"/>
  <path d="M616.500 55.600h5l1.500 1v4.400l-1.500 1h-5z" fill="#aaa4ac" stroke="#9a7a50" stroke-width=".6"/>
  <path d="M630.500 56.200l2.200 2.600-2.200 2.600z" fill="#f0b040" stroke="#d89a2c" stroke-width=".6"/>
  <rect x="626.500" y="58.200" width="2.400" height="1.200" fill="#2a5aa8"/>
 </g>
 <use href="#dd" x="636.800" y="57"/>
 <!-- next annotation -->
 <rect x="655" y="54" width="10.600" height="12.600" fill="#f7f9fd"/>
 <path d="M665.400 54v12.600" stroke="#a9a07a" stroke-width="1"/><path d="M653.800 63v3.600" stroke="#8aa0cc" stroke-width="1"/>
 <g stroke="#b4c0e0" stroke-width="1"><path d="M660 54.500h4M662 56.500h2M661 58.500h3M659 60.500h5M658 62.500h2M661.500 62.500h2.500M659.500 64.800h4.500"/></g>
 <rect x="654.900" y="64" width="3.200" height="1.800" fill="#2a5aa8"/>
 <path d="M654.600 51.400h3.600v5.200h2.900l-4.700 5.700-4.700-5.700h2.900z" fill="url(#gY)" stroke="#c8901c" stroke-width="1" stroke-linejoin="round"/>
 <use href="#dd" x="674.800" y="57"/>
 <!-- prev annotation -->
 <rect x="691.600" y="51" width="11.800" height="13" fill="#f7f9fd"/>
 <path d="M703.400 51v13" stroke="#a9a07a" stroke-width="1"/><path d="M691.400 51v5" stroke="#a9a07a" stroke-width="1"/>
 <g stroke="#b4c0e0" stroke-width="1"><path d="M697.500 53.500h4.500M698.500 55.500h1.500M701 55.500h1M699 57.500h3M700.500 59.500h1.500M700 61.500h2M699 63.300h3"/></g>
 <rect x="693.400" y="52.400" width="3" height="1.800" fill="#2a5aa8"/>
 <path d="M692.600 66.300h3.800v-5.400h2.800l-4.700-5.700-4.700 5.700h2.800z" fill="url(#gY)" stroke="#c8901c" stroke-width="1" stroke-linejoin="round"/>
 <use href="#dd" x="712.800" y="57"/>
 <!-- last edit -->
 <path d="M742.600 56h-7v-2.900l-5.800 5.600 5.800 5.600v-2.900h7z" fill="url(#gYh)" stroke="#c8901c" stroke-width="1" stroke-linejoin="round"/>
 <path d="M729.800 53v5M727.600 54.200l4.400 2.600M732 54.200l-4.400 2.600" stroke="#2a5aa8" stroke-width="1"/>
 <!-- back -->
 <path d="M765.600 56h-7v-2.900l-6.200 5.600 6.200 5.600v-2.900h7z" fill="url(#gYh)" stroke="#c8901c" stroke-width="1" stroke-linejoin="round"/>
 <use href="#dd" x="773.800" y="57"/>
 <!-- forward disabled -->
 <path d="M790.300 56h7v-2.900l6.200 5.600-6.200 5.600v-2.900h-7z" fill="#f6f6f6" stroke="#bcbcbc" stroke-width="1" stroke-linejoin="round"/>
 <path d="M811.900 57h7.400l-3.700 4z" fill="#6f6f6f"/>
 <!-- quick access -->
 <!-- open perspective -->
 <rect x="1254.500" y="55.500" width="11.500" height="11" fill="#f8f4e6" stroke="#b39a5c" stroke-width="1"/>
 <rect x="1254.500" y="55.200" width="11.500" height="2.300" fill="#7fa7dc"/>
 <path d="M1259 57.500v9M1259 61.500h7" stroke="#b39a5c" stroke-width="1"/>
 <use href="#star" x="1265" y="55.500"/>
 <path d="M1275.500 51v17.500" stroke="#a0a0a0" stroke-width="1"/>
 <!-- java perspective button -->
 <rect x="1288.300" y="52.700" width="6.800" height="6.800" fill="#ecd09a" stroke="#a4603c" stroke-width=".9"/>
 <path d="M1291.700 52v8.200M1287.600 56.100h8.200" stroke="#8a4a30" stroke-width=".9"/>
 <path d="M1298.600 52.500v4.300c0 1.400-.8 2.100-2.300 2.100" fill="none" stroke="#2a5ab0" stroke-width="1.500"/>
 <circle cx="1288.800" cy="61.800" r="3.300" fill="#2f8f4a"/><path d="M1287 60.800a2 1.200 0 0 1 3.600 0" fill="#86cc96"/>
 <circle cx="1294.300" cy="64" r="3.300" fill="#5a48a0"/><path d="M1292.500 63a2 1.200 0 0 1 3.600 0" fill="#a596d4"/>
</svg>
<!-- tree + tab icons -->
<svg style="left:0;top:76px" width="1366" height="330" viewBox="0 76 1366 330">
 <defs>
  <linearGradient id="pgF" x1="0" y1="0" x2="1" y2="1"><stop offset="0" stop-color="#fff"/><stop offset="1" stop-color="#d8e6f6"/></linearGradient>
  <linearGradient id="jarB" x1="0" y1="0" x2="0" y2="1"><stop offset="0" stop-color="#fbfdff"/><stop offset=".6" stop-color="#e2ecfa"/><stop offset="1" stop-color="#b9cdea"/></linearGradient>
  <g id="cd"><path d="M-4.300 -2.300L0 2L4.300 -2.300" fill="none" stroke="#404040" stroke-width="1.800"/></g>
  <g id="cr"><path d="M-2.300 -4.300L2.200 0L-2.300 4.300" fill="none" stroke="#a6a6a6" stroke-width="2"/></g>
  <g id="err"><rect x="0" y="0" width="7" height="8" fill="#dc3b4b"/><path d="M1.700 2.200l3.600 3.600M5.300 2.200l-3.600 3.600" stroke="#fff" stroke-width="1.300"/></g>
  <g id="warn"><path d="M3.500 .3L7 6.600c.2.400 0 .8-.5.800H.500c-.5 0-.7-.4-.5-.8z" fill="#f4cd62" stroke="#d09a28" stroke-width=".7"/><path d="M3.500 2.400v2.500M3.500 5.500v1" stroke="#3a2a10" stroke-width="1"/></g>
  <g id="jf"><path d="M.5 .5h7l3.300 3.300v9.500H.5z" fill="url(#pgF)" stroke="#a78a3c" stroke-width="1"/><path d="M7.500 .5v3.300h3.300z" fill="#e9d9a6" stroke="#a78a3c" stroke-width=".8"/><path d="M6.300 3.500v4.800c0 1.500-1 2.200-2.600 1.900" fill="none" stroke="#2c66a8" stroke-width="1.700"/></g>
  <g id="libi"><rect x=".4" y="2.300" width="6.600" height="1.700" fill="#2b7bb8"/><rect x=".4" y="3.600" width="6.600" height=".6" fill="#1b3f78"/><rect x="1" y="4.300" width="8.200" height="3" fill="#3aa384"/><rect x="1.600" y="5.300" width="7" height=".8" fill="#8fd4b4"/><rect x=".3" y="7.600" width="9.700" height="3.700" fill="#d9874a" stroke="#b4602c" stroke-width=".6"/><path d="M8.300 .6l2.300-.6 3.800 10.900-2.300.7z" fill="#f2b436" stroke="#d88a20" stroke-width=".6"/><path d="M10.200 2.500l2.600 7.600" stroke="#fbe08a" stroke-width=".7" stroke-dasharray="1 1"/></g>
  <g id="jari"><path d="M1.500 3.200c-1 .8-1.400 1.800-1.400 3.200v5.800c0 1.600 1 2.500 2.500 2.500h7c1.500 0 2.500-.9 2.500-2.500V6.400c0-1.400-.4-2.400-1.400-3.200z" fill="url(#jarB)" stroke="#8ba2cc" stroke-width=".9"/><rect x="1.300" y=".4" width="9.600" height="2.700" rx="1.200" fill="#f0d670" stroke="#c4a434" stroke-width=".8"/><g fill="none" stroke="#555" stroke-width=".9"><ellipse cx="3.300" cy="9.300" rx="1" ry="1.500"/><path d="M6.100 7.800v3"/><ellipse cx="8.900" cy="9.300" rx="1" ry="1.500"/></g></g>
  <g id="jfi"><rect x=".5" y=".5" width="15" height="15" rx="1.800" fill="#fdfdfe" stroke="#6f8db4" stroke-width="1"/><path d="M15 3v11c0 .6-.4 1-1 1H3" fill="none" stroke="#b9c9de" stroke-width="1"/><path d="M9.300 2.300c-2 1.600-3.300 3-2.300 5.300M10.600 4c-1.500 1.200-2 2.300-1.300 3.800" fill="none" stroke="#e8772a" stroke-width="1.100"/><path d="M7 8.300h5.200M7 10.300h5.600M7 12.500h4.600" stroke="#3e6eaa" stroke-width="1"/><path d="M12 7.600c2.300.3 2.300 3.300 0 3.600" fill="none" stroke="#3e6eaa" stroke-width="1"/><rect x="0" y="8.800" width="6.500" height="1.600" fill="#2a5a9c"/><rect x="0" y="10.400" width="6.500" height="1.700" fill="#3a9a52"/><rect x="0" y="12.100" width="6.500" height="2.400" fill="#d9622c"/></g>
  <g id="fold"><path d="M.5 11V2.300L2 .6h4l1.400 1.700h5.400v2.900" fill="#fbe9b4" stroke="#c08a42" stroke-width="1" stroke-linejoin="round"/><path d="M.5 11.300L4 5.200h11l-3.600 6.100z" fill="url(#gF)" stroke="#c08a42" stroke-width="1" stroke-linejoin="round"/></g>
  <g id="xclose"><path d="M.5 .5h2.300l2.200 2.600 2.200-2.600h2.300v.9L6.600 5l2.900 3.600v.9H7.200L5 6.900 2.800 9.500H.5v-.9L3.400 5 .5 1.400z" fill="#fff" stroke="#555" stroke-width=".9"/></g>
  <g id="mini"><rect x=".5" y=".5" width="9" height="3.400" fill="#fff" stroke="#555" stroke-width="1"/></g>
  <g id="maxi"><rect x=".5" y=".5" width="9.500" height="9" fill="#fff" stroke="#555" stroke-width="1"/><path d="M.5 2.200h9.500" stroke="#555" stroke-width="1"/></g>
  <g id="rest"><rect x="2.800" y=".5" width="6" height="4.300" fill="#fff" stroke="#555" stroke-width="1"/><rect x=".5" y="3.300" width="6" height="4.300" fill="#fff" stroke="#555" stroke-width="1"/><path d="M2.800 1.400h6M.5 4.200h6" stroke="#555" stroke-width=".9"/></g>
 </defs>
 <!-- package explorer tab icon -->
 <g stroke="#6b4a2a" stroke-width="1" fill="none"><path d="M8.500 81v14.500M8.500 85.500h3M8.500 91.500h3"/></g>
 <g fill="#d8a868" stroke="#a4603c" stroke-width=".7"><rect x="11.800" y="82.500" width="5.600" height="5.400"/><rect x="11.800" y="89" width="5.600" height="5.400"/></g>
 <path d="M14.600 82.500v5.400M11.800 85.200h5.600M14.600 89v5.400M11.800 91.700h5.600" stroke="#8a4a30" stroke-width=".7"/>
 <use href="#xclose" x="121" y="82"/>
 <use href="#mini" x="225" y="81"/>
 <use href="#maxi" x="248" y="81"/>
 <!-- left toolbar: collapse all, link, separator, gray balls, menu -->
 <linearGradient id="cag" x1="0" y1="0" x2="1" y2="1"><stop offset="0" stop-color="#bfe0e0"/><stop offset="1" stop-color="#fff"/></linearGradient>
 <rect x="168.500" y="106.500" width="10.500" height="10.500" fill="#cfe6ea" stroke="#8c9cc8" stroke-width="1"/>
 <rect x="170.500" y="108.500" width="10.500" height="10.300" fill="url(#cag)" stroke="#7f8fc0" stroke-width="1"/>
 <path d="M172.200 113.500h6.800" stroke="#1a4a9a" stroke-width="1.600"/>
 <path d="M200.800 107.200h-6.300v-2.300l-4.800 3.900 4.800 3.900v-2.300h6.300z" fill="#fff6d2" stroke="#c8901c" stroke-width="1" stroke-linejoin="round"/>
 <path d="M193.200 114.200h6.300v-2.300l4.800 3.900-4.800 3.900v-2.300h-6.300z" fill="#fff6d2" stroke="#c8901c" stroke-width="1" stroke-linejoin="round"/>
 <path d="M211.500 103.200v18" stroke="#808080" stroke-width="1"/>
 <circle cx="225.200" cy="108.500" r="2.900" fill="#d0d0d0"/><path d="M223.500 107.600a1.800 1 0 0 1 3.400 0" fill="#e6e6e6"/>
 <circle cx="231.900" cy="111.300" r="3.200" fill="#c2c2c2"/><path d="M230 110.300a2 1.100 0 0 1 3.800 0" fill="#dcdcdc"/>
 <circle cx="226.300" cy="115.300" r="3.500" fill="#9c9c9c"/><path d="M224.200 114.200a2.200 1.200 0 0 1 4.200 0" fill="#c4c4c4"/>
 <path d="M252.300 107.500h9.400l-4.700 4.400z" fill="#fff" stroke="#555" stroke-width="1" stroke-linejoin="round"/>
 <!-- tree chevrons -->
 <use href="#cd" x="13.500" y="132.500"/>
 <use href="#cd" x="32.500" y="150.700"/>
 <use href="#cd" x="51.500" y="168.800"/>
 <use href="#cr" x="70.800" y="187.300"/>
 <use href="#cr" x="70.800" y="205.300"/>
 <use href="#cr" x="70.800" y="223.300"/>
 <use href="#cr" x="33" y="241.300"/>
 <use href="#cd" x="32.500" y="258.700"/>
 <use href="#cr" x="51.800" y="277.300"/>
 <use href="#cr" x="51.800" y="295.300"/>
 <use href="#cr" x="51.800" y="313.300"/>
 <use href="#cd" x="32.500" y="330.700"/>
 <!-- project icon -->
 <path d="M26.500 133v-6.800l1.500-1.600h4l1.300 1.600h3.400v3" fill="#fbe9b4" stroke="#9ab0cc" stroke-width="1" stroke-linejoin="round"/>
 <path d="M27 135.300l3.200-5.600h10.400l-3.400 5.600z" fill="#8fbcec" stroke="#5a8ccc" stroke-width="1" stroke-linejoin="round"/>
 <path d="M39.300 124v5c0 1.300-.8 2-2.600 1.900" fill="none" stroke="#2c66a8" stroke-width="1.400"/>
 <use href="#err" x="25" y="132"/>
 <!-- src folder -->
 <path d="M45.500 154v-7.200l1.500-1.600h3.600l1.300 1.600h4v3" fill="#fbe9b4" stroke="#c08a42" stroke-width="1" stroke-linejoin="round"/>
 <path d="M46 155.300l3.400-5.600h10.400l-3.600 5.600z" fill="url(#gF)" stroke="#c08a42" stroke-width="1" stroke-linejoin="round"/>
 <rect x="51.600" y="145" width="6.400" height="5.200" fill="#e6c690" stroke="#8a4a30" stroke-width=".8"/>
 <path d="M54.800 144.300v6.400M50.800 147.600h8" stroke="#6b3a24" stroke-width=".8"/>
 <use href="#err" x="44" y="150"/>
 <!-- default package -->
 <rect x="66.500" y="163.500" width="10.300" height="10.300" fill="#e6c690" stroke="#a4603c" stroke-width="1"/>
 <path d="M71.600 162.300v12.800M65.500 168.600h12.600" stroke="#7a4028" stroke-width="1"/>
 <use href="#err" x="63" y="168"/>
 <!-- java files -->
 <use href="#jf" x="85" y="179"/><use href="#warn" x="82" y="186.300"/>
 <use href="#jf" x="85" y="197"/><use href="#warn" x="82" y="204.300"/>
 <use href="#jf" x="85" y="215"/><use href="#err" x="82" y="222"/>
 <!-- libraries -->
 <use href="#libi" x="45" y="234.700"/>
 <use href="#libi" x="45" y="252.700"/>
 <use href="#jari" x="64.900" y="268"/>
 <use href="#jari" x="64.900" y="286"/>
 <use href="#jari" x="64.900" y="304"/>
 <use href="#fold" x="45" y="324.500"/>
 <use href="#jfi" x="63" y="340.200"/>
 <use href="#jfi" x="63" y="358.200"/>
 <use href="#jfi" x="63" y="376.200"/>
 <!-- editor tabs -->
 <use href="#jf" x="280" y="80"/><use href="#warn" x="276.500" y="87.300"/>
 <use href="#jf" x="422" y="80"/><use href="#err" x="419" y="87"/>
 <use href="#jf" x="568" y="80"/><use href="#warn" x="564.500" y="87.300"/>
 <use href="#xclose" x="542.500" y="82"/>
 <use href="#mini" x="1029" y="80.500"/>
 <use href="#rest" x="1051.500" y="81"/>
 <!-- task list tab -->
 <linearGradient id="tlg" x1="0" y1="0" x2="0" y2="1"><stop offset="0" stop-color="#fdfdff"/><stop offset=".6" stop-color="#e4e2f4"/><stop offset="1" stop-color="#a9a4d8"/></linearGradient><path d="M1084.500 80.500h10v13l-2-1.300-2.200 0-1.800 2.300h-2.500l-1.500-1.500z" fill="url(#tlg)" stroke="#555" stroke-width="1" stroke-linejoin="round"/>
 <linearGradient id="tll" x1="0" y1="0" x2="1" y2="0"><stop offset="0" stop-color="#222"/><stop offset="1" stop-color="#aaa"/></linearGradient><g fill="url(#tll)"><rect x="1086" y="83" width="6.800" height="1"/><rect x="1086" y="85" width="6.800" height="1"/><rect x="1086" y="87" width="6.800" height="1"/><rect x="1086" y="89" width="6.800" height="1"/></g>
 <use href="#xclose" x="1153" y="82"/>
 <use href="#mini" x="1300.500" y="81"/>
 <use href="#maxi" x="1323.500" y="81"/>
</svg>
<!-- task list toolbar, right trim, popup, mylyn icons -->
<svg style="left:830px;top:76px" width="536" height="640" viewBox="830 76 536 640">
 <!-- new task -->
 <path d="M1091.500 109.500l2.500-3h7.500v9.500l-2.500 2.500h-7.500z" fill="#f4f7fd" stroke="#7f92b8" stroke-width="1" stroke-linejoin="round"/>
 <path d="M1091.500 109.500h7.500v9M1099 109.500l2.500-3" fill="none" stroke="#9aaace" stroke-width=".8"/>
 <use href="#star" x="1100.700" y="107.500"/>
 <path d="M1111 110.200h7.200l-3.600 3.800z" fill="#111"/>
 <path d="M1124.500 103v17.500M1178.500 103v17.500M1209.500 103v17.500M1286.500 103v17.500" stroke="#8c8c8c" stroke-width="1"/>
 <!-- categorized (selected) -->
 <path d="M1135.500 107.500h6.500v3.500h-6.500z" fill="#e6d2b0" stroke="#5a72b4" stroke-width="1"/>
 <path d="M1136.500 107v-1.500h4.500v1.500" fill="#e6c8a0" stroke="#b08a5a" stroke-width=".8"/>
 <g fill="none" stroke="#5a72b4" stroke-width="1"><path d="M1138.500 111v6.500h3M1138.500 113.500h3M1143 109.500h5.500M1145 113.500h3.500M1145 117.500h3.500"/><rect x="1141.500" y="112.300" width="2.400" height="2.400" fill="#cfdcf4"/><rect x="1141.500" y="116.300" width="2.400" height="2.400" fill="#cfdcf4"/></g>
 <!-- scheduled -->
 <circle cx="1160.800" cy="108.200" r="2.900" fill="#f4f8ff" stroke="#5a72b4" stroke-width="1"/>
 <path d="M1160.800 106.600v1.800l1.200.8" fill="none" stroke="#5a72b4" stroke-width=".8"/>
 <g fill="none" stroke="#5a72b4" stroke-width="1"><path d="M1160.500 111.500v6h3M1160.500 113.500h3M1165.500 109.500h5M1167 113.500h3.500M1167 117.500h3.500"/><rect x="1163.500" y="112.300" width="2.400" height="2.400" fill="#cfdcf4"/><rect x="1163.500" y="116.300" width="2.400" height="2.400" fill="#cfdcf4"/></g>
 <!-- balls -->
 <circle cx="1192.200" cy="108.800" r="3" fill="#c4c4c4"/><path d="M1190.400 107.900a1.900 1.100 0 0 1 3.600 0" fill="#e0e0e0"/>
 <circle cx="1198.900" cy="111.300" r="3.200" fill="#b4b4b4"/><path d="M1197 110.300a2 1.100 0 0 1 3.800 0" fill="#d6d6d6"/>
 <circle cx="1193.300" cy="115.400" r="3.500" fill="#7766ae"/><path d="M1191.200 114.300a2.200 1.200 0 0 1 4.200 0" fill="#b0a4d8"/>
 <!-- hide completed -->
 <path d="M1221.900 113.800l3 2.800 5.200-6.800" fill="none" stroke="#4f6c9c" stroke-width="1.500"/>
 <path d="M1219 106l14.400 13.400" stroke="#1d2b70" stroke-width="1.200"/>
 <!-- people -->
 <circle cx="1243.600" cy="107" r="1.700" fill="#e8981c"/><path d="M1241.200 109.500h4.800v5h-1v4.300h-2.800v-4.300h-1z" fill="#e8981c" stroke="#c47a10" stroke-width=".5"/>
 <circle cx="1251.600" cy="107" r="1.700" fill="#8c9bac"/><path d="M1249.200 109.500h4.800v5h-1v4.300h-2.800v-4.300h-1z" fill="#9aa8b8" stroke="#6f7f92" stroke-width=".5"/>
 <path d="M1246.700 105l10 11" stroke="#1d2b70" stroke-width="1.200"/>
 <!-- collapse all -->
 <rect x="1266.500" y="106.500" width="10.500" height="9.500" fill="#dfeaf6" stroke="#9ab0cc" stroke-width="1"/>
 <rect x="1268.800" y="108.800" width="10" height="9.700" fill="#f2f7fd" stroke="#7f9ac4" stroke-width="1"/>
 <path d="M1271 113.700h5.600" stroke="#1f4f9a" stroke-width="1.500"/>
 <!-- sync -->
 <path d="M1302.800 107v10c0 1.200 1.600 2 3.600 2s3.600-.8 3.600-2v-10" fill="#5b84d2" stroke="#3a5ca8" stroke-width=".8"/>
 <ellipse cx="1306.400" cy="107" rx="3.600" ry="1.700" fill="#9ab8ee" stroke="#3a5ca8" stroke-width=".8"/>
 <path d="M1304.500 108.500v9" stroke="#a8c4f4" stroke-width="1.200"/>
 <path d="M1296 110.500c.5-2.500 3-3.800 5.500-2.700l.8-1.500 1.600 4.200-4.400.6.900-1.500c-1.500-.6-2.800 0-3.300 1.400zM1305 114.500c-.5 2.500-3 3.800-5.500 2.700l-.8 1.500-1.600-4.200 4.400-.6-.9 1.500c1.500.6 2.800 0 3.300-1.400z" fill="#fbe08a" stroke="#c8901c" stroke-width=".7" stroke-linejoin="round"/>
 <!-- view menu -->
 <path d="M1327.500 107.500h9l-4.500 4.400z" fill="#fff" stroke="#555" stroke-width="1" stroke-linejoin="round"/>
 <!-- find magnifier -->
 <circle cx="1165" cy="136.300" r="3.500" fill="#fff" stroke="#8a8a8a" stroke-width="1"/>
 <path d="M1167.600 139l3.800 3.400" stroke="#444" stroke-width="1.600"/>
 <path d="M1190.800 132.800l5 4.500-5 4.500zM1230.800 132.800l5 4.500-5 4.500z" fill="#333"/>
 <!-- right trim -->
 <use href="#rest" x="1349.500" y="82"/>
 <circle cx="1354.200" cy="107.800" r="7.700" fill="#e6eaec" stroke="#8a9094" stroke-width="1.100"/>
 <circle cx="1354.600" cy="104" r="2.700" fill="#1fa4ec"/><circle cx="1350.500" cy="109.800" r="2.700" fill="#e8c81c"/><circle cx="1357.800" cy="110.200" r="2.700" fill="#22c044"/>
 <path d="M1353.500 103l2.200 2M1355.700 103l-2.200 2M1349.400 108.800l2.200 2M1351.600 108.800l-2.200 2M1356.700 109.200l2.200 2M1358.900 109.200l-2.200 2" stroke="#fff" stroke-width=".6" opacity=".7"/>
 <use href="#rest" x="1349.500" y="126"/>
 <rect x="1347.500" y="145.500" width="5" height="5" fill="#dbe8f8" stroke="#3b7ac8" stroke-width="1"/>
 <rect x="1347.500" y="154.500" width="5" height="5" fill="#dbe8f8" stroke="#3b7ac8" stroke-width="1"/>
 <path d="M1354 148.500h6.500M1354 157.500h6.500M1358 152.500h2.500" stroke="#3b7ac8" stroke-width="1"/><rect x="1354.500" y="151.300" width="2.200" height="2.200" fill="#fff" stroke="#3b7ac8" stroke-width=".8"/>
 <use href="#rest" x="1349.500" y="170"/>
 <rect x="1348.200" y="189.400" width="12.800" height="10.400" rx=".8" fill="#2b64b4"/>
 <rect x="1349.800" y="191" width="9.600" height="7.200" fill="#f2f6ff" stroke="#8a96b8" stroke-width=".6"/>
 <path d="M1351 193.500h5M1351 195.600h7" stroke="#1f3272" stroke-width="1"/>
 <path d="M1352.800 199.800h3.600v1.500h-3.600z" fill="#2b64b4"/><rect x="1349.200" y="201" width="10.800" height="1.300" fill="#2b64b4"/>
 <!-- popup header icon -->
 <circle cx="844.300" cy="182.500" r="3.400" fill="#fbe9a8" stroke="#e0a020" stroke-width="1"/>
 <rect x="842.600" y="186" width="3.500" height="2.300" fill="#a8b0b8"/><rect x="842" y="188.300" width="4.500" height="1" fill="#8a9098"/>
 <rect x="846.700" y="183.800" width="6.500" height="7.200" fill="#dc3b4b"/>
 <path d="M848.300 185.800l3.300 3.300M851.600 185.800l-3.300 3.300" stroke="#fff" stroke-width="1.200"/>
 <!-- popup fix icons -->
 <rect x="850.500" y="227.500" width="10.500" height="3.600" fill="#d9dc48" stroke="#6f9c24" stroke-width="1"/>
 <path d="M854.700 242.100h2v4.200h4.200v2h-4.200v4.200h-2v-4.200h-4.200v-2h4.200z" fill="#d9dc48" stroke="#6f9c24" stroke-width="1" stroke-linejoin="round"/>
 <circle cx="855" cy="265.900" r="4" fill="#3d8c3d"/><path d="M852.600 264.800a2.400 1.400 0 0 1 4.600 0" fill="#8cc88c"/>
 <path d="M861.600 259.400a2 2 0 1 0 0 2.300" fill="none" stroke="#2a6a2a" stroke-width="1.300"/>
 <!-- popup footer icon -->
 <path d="M845.800 284.500h6.700l3.500 3.500v9h-10.200z" fill="#f8f4e6" stroke="#b8a070" stroke-width=".9"/>
 <path d="M852.500 284.500v3.500h3.500" fill="#e9d9a6" stroke="#b8a070" stroke-width=".8"/>
 <path d="M848 292l2-3 1.600 3.600 1.800-4 1.600 2.400" fill="none" stroke="#e03030" stroke-width="1"/>
 <circle cx="845.300" cy="294.400" r="3.700" fill="none" stroke="#2c3f74" stroke-width="2.300" stroke-dasharray="1.600 1.300"/>
 <circle cx="845.300" cy="294.400" r="3" fill="#3a5090"/><circle cx="845.300" cy="294.400" r="1.400" fill="#c8d0e8"/>
 <!-- resize grip -->
 <g fill="#a8a8a8"><rect x="1232" y="291" width="2" height="2"/><rect x="1232" y="295" width="2" height="2"/><rect x="1228" y="295" width="2" height="2"/><rect x="1232" y="299" width="2" height="2"/><rect x="1228" y="299" width="2" height="2"/><rect x="1224" y="299" width="2" height="2"/></g>
 <!-- mylyn -->
 <circle cx="1092.900" cy="659.200" r="6.300" fill="#fff" stroke="#20488c" stroke-width="1.300"/>
 <circle cx="1092.900" cy="655.800" r="1.150" fill="#1f3d75"/><path d="M1091.300 658.200h2.200v4.300M1091 662.700h4" fill="none" stroke="#1f3d75" stroke-width="1.300"/>
 <use href="#xclose" x="1322" y="655"/>
</svg>

</body>
</html>
